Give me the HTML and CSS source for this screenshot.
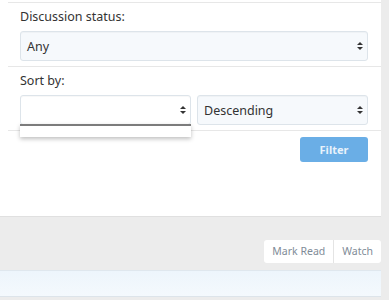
FILE: index.html
```html
<!DOCTYPE html>
<html lang="en">
<head>
  <meta charset="UTF-8" />
  <meta name="viewport" content="width=device-width, initial-scale=1.0"/>
  <title>Filter threads</title>
  <link rel="stylesheet" href="styles.css">
</head>
<body>

  <div class="panel">
    <div class="row">
      <label class="label">Discussion status:</label>
      <div class="select">
        <span>Any</span>
        <span class="arrows"></span>
      </div>
    </div>

    <div class="row">
      <label class="label">Sort by:</label>
      <div class="pair">
        <div class="select open">
          <span></span>
          <span class="arrows"></span>
          <div class="menu"></div>
        </div>
        <div class="select">
          <span>Descending</span>
          <span class="arrows"></span>
        </div>
      </div>
    </div>

    <div class="row footer">
      <button class="filter-btn">Filter</button>
    </div>
  </div>

  <div class="actions">
    <div class="btn-group">
      <a class="btn">Mark Read</a>
      <a class="btn">Watch</a>
    </div>
  </div>

  <div class="bottom-bar"></div>

</body>
</html>
```

FILE: styles.css
```css
body {
  margin: 0;
  background: #ececec;
  font-family: "Noto Sans", "Open Sans", sans-serif;
  font-size: 12.5px;
  color: #333;
  width: 381px;
}

.panel {
  background: #fff;
  padding-top: 2px;
  height: 214px;
  border-bottom: 1px solid #e0e0e0;
}

.row {
  margin-left: 8px;
  padding: 5px 13px 5px 12px;
  border-top: 1px solid #e7e7e7;
}

.label {
  display: block;
  line-height: 18px;
  color: #333;
  margin-bottom: 5px;
}

.select {
  position: relative;
  display: flex;
  align-items: center;
  justify-content: space-between;
  height: 28px;
  padding: 0 6px;
  background: #f6f9fc;
  border: 1px solid #dde4ea;
  border-radius: 3px;
  box-shadow: inset 0 1px 1px rgba(0,0,0,0.03);
}

.pair {
  display: flex;
  gap: 6px;
}

.pair .select {
  flex: 1;
}

.open {
  background: #fff;
}

.arrows {
  width: 0;
  height: 8px;
  position: relative;
  margin-right: 1px;
}

.arrows::before,
.arrows::after {
  content: "";
  position: absolute;
  left: -3px;
  border-left: 3px solid transparent;
  border-right: 3px solid transparent;
}

.arrows::before {
  top: 0;
  border-bottom: 3px solid #333;
}

.arrows::after {
  bottom: 0;
  border-top: 3px solid #333;
}

.menu {
  position: absolute;
  left: -1px;
  right: -1px;
  top: 28px;
  height: 11px;
  background: #fff;
  border-top: 2px solid #7c7c7c;
  box-shadow: 0 2px 4px rgba(0,0,0,0.25);
}

.footer {
  display: flex;
  justify-content: flex-end;
  padding-top: 6px;
}

.filter-btn {
  width: 68px;
  height: 25px;
  border: none;
  border-radius: 3px;
  background: #6aaee6;
  color: #e8f2fb;
  font-family: "Noto Sans", sans-serif;
  font-size: 11px;
  font-weight: bold;
}

.actions {
  display: flex;
  justify-content: flex-end;
  padding-top: 23px;
}

.btn-group {
  display: flex;
  background: #fff;
  border-radius: 3px;
}

.btn {
  height: 23px;
  line-height: 23px;
  padding: 0 8px;
  font-size: 10.5px;
  color: #7f8c98;
}

.btn + .btn {
  border-left: 1px solid #e4e4e4;
}

.bottom-bar {
  margin-top: 7px;
  height: 25px;
  background: linear-gradient(to bottom, #edf5fc, #f4f9fd);
  border-top: 1px solid #dfe7ee;
  border-bottom: 1px solid #dde4ea;
}
```
